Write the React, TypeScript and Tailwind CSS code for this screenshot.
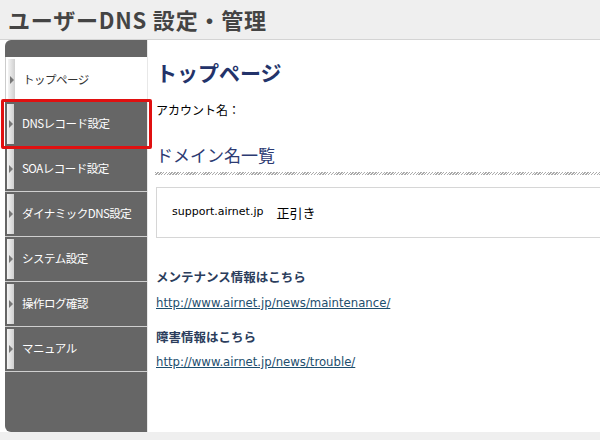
import React from 'react';

const navItems = [
  'トップページ',
  'DNSレコード設定',
  'SOAレコード設定',
  'ダイナミックDNS設定',
  'システム設定',
  '操作ログ確認',
  'マニュアル',
];

function Tab() {
  return (
    <div className="ml-[2px] my-[2px] w-[7px] flex items-center bg-gradient-to-r from-[#f4f4f4] to-[#cfcfcf]">
      <div className="ml-[2px] w-0 h-0 border-y-[4px] border-y-transparent border-l-[4px] border-l-[#777]" />
    </div>
  );
}

export default function App() {
  return (
    <div
      className="w-[600px] h-[440px] bg-[#efefef] overflow-hidden relative"
      style={{ fontFamily: '"Noto Sans CJK JP", "Noto Sans", sans-serif' }}
    >
      {/* Header */}
      <div className="h-[40px] pl-[8px] flex items-center border-b border-[#d4d4d4] shadow-[0_1px_2px_rgba(0,0,0,0.12)]">
        <h1 className="text-[22px] font-bold text-[#444] tracking-[0.8px]">ユーザーDNS 設定・管理</h1>
      </div>

      <div className="flex h-[392px] bg-white">
        {/* Sidebar */}
        <div className="ml-[5px] w-[142px] bg-[#666] rounded-tl-[6px] rounded-bl-[6px] flex flex-col">
          <div className="h-[17px]" />
          {navItems.map((label, i) => (
            <div
              key={label}
              className={`flex h-[45px] ${i === 0 ? 'bg-white border-l border-[#ccc]' : 'border-b border-[#cfcfcf]'}`}
            >
              <Tab />
              <span className={`ml-[8px] self-center text-[11.5px] tracking-[-0.5px] ${i === 0 ? 'text-[#333]' : 'text-white'}`}>
                {label}
              </span>
            </div>
          ))}
        </div>

        {/* Content */}
        <div className="flex-1 pl-[8px] pt-[17px] border-l border-[#e8e8e8]">
          <h2 className="text-[21px] font-bold text-[#23336a] leading-[30px]">トップページ</h2>
          <p className="mt-[14px] text-[12px] leading-[18px] text-black">アカウント名：</p>
          <h3 className="mt-[24px] text-[17px] text-[#2c3a72] leading-[24px]">ドメイン名一覧</h3>
          <div className="mt-[5px] -ml-[1px] h-[3px] bg-[repeating-linear-gradient(135deg,#aaa_0px,#aaa_1px,#fff_1px,#fff_2px)]" />
          <div className="mt-[12px] h-[51px] border border-[#d6d6d6] border-r-0 flex items-center pl-[15px]">
            <span className="text-black" style={{ fontFamily: '"DejaVu Sans", "Noto Sans CJK JP", sans-serif', fontSize: '11px' }}>
              support.airnet.jp
            </span>
            <span className="ml-[13px] text-[13px] text-black">正引き</span>
          </div>

          <p className="mt-[30px] text-[12.5px] leading-[18px] font-bold text-[#2b3d5c]">メンテナンス情報はこちら</p>
          <a className="block mt-[9px] leading-[16px] text-[#1d4e6e] underline" style={{ fontFamily: '"DejaVu Sans", sans-serif', fontSize: '11.7px' }}>
            http://www.airnet.jp/news/maintenance/
          </a>
          <p className="mt-[17px] text-[12.5px] leading-[18px] font-bold text-[#2b3d5c]">障害情報はこちら</p>
          <a className="block mt-[8px] leading-[16px] text-[#1d4e6e] underline" style={{ fontFamily: '"DejaVu Sans", sans-serif', fontSize: '11.7px' }}>
            http://www.airnet.jp/news/trouble/
          </a>
        </div>
      </div>

      {/* Highlight box */}
      <div className="absolute left-[1px] top-[99px] w-[151px] h-[50px] border-[3px] border-[#e01010] rounded-[2px]" />
    </div>
  );
}
